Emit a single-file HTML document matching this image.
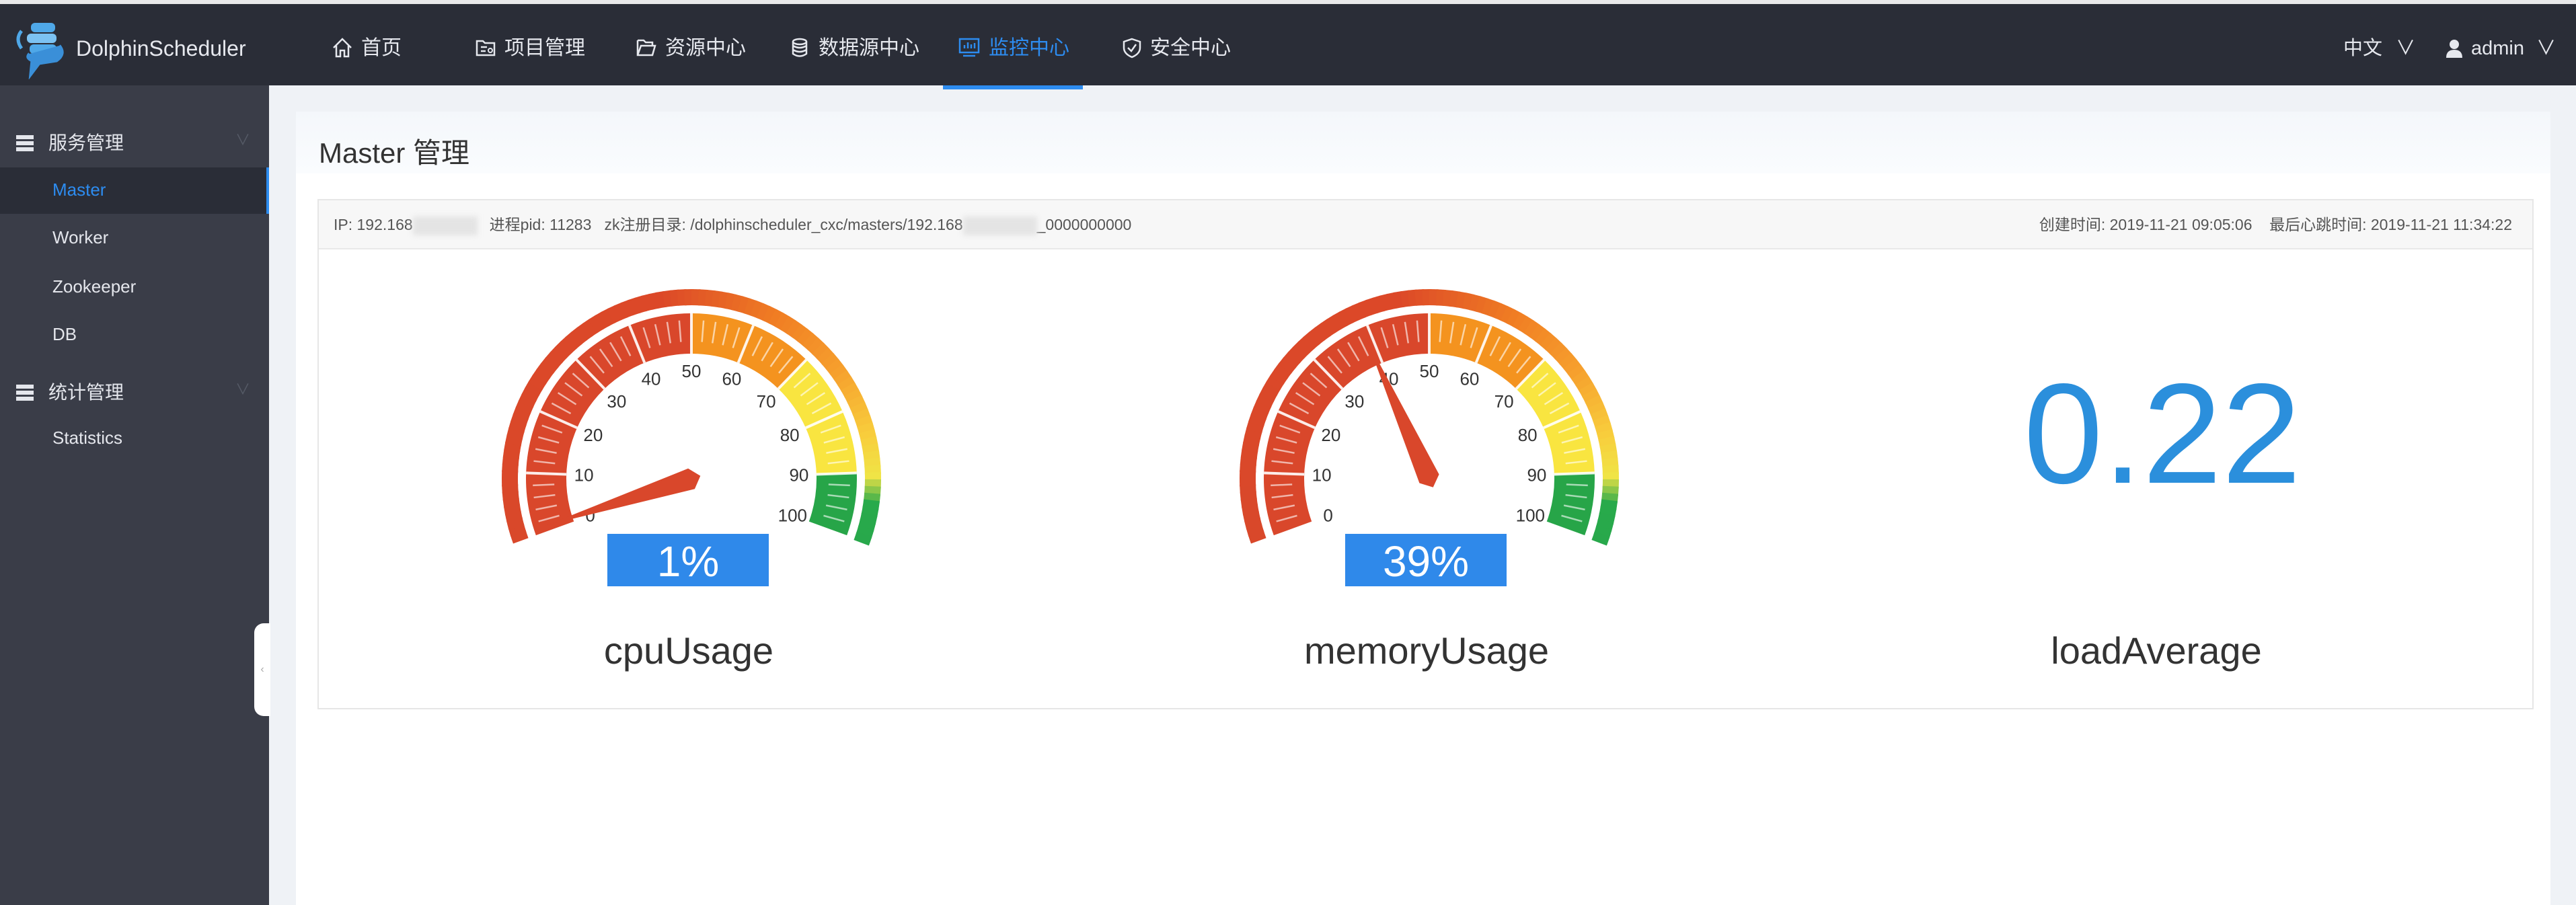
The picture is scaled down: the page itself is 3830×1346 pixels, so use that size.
<!DOCTYPE html>
<html><head><meta charset="utf-8">
<style>
*{margin:0;padding:0;box-sizing:border-box}
body{width:3830px;height:1346px;overflow:hidden;background:#eff2f6;font-family:"Liberation Sans","Noto Sans CJK SC",sans-serif;position:relative}
.top{position:absolute;left:0;top:0;width:3830px;height:127px;background:#2a2d37;border-top:6px solid #e9e9ea}
.nav{position:absolute;top:46px;color:#e6e8ee;font-size:30px;white-space:nowrap;line-height:40px}
.nav svg{vertical-align:-6px;margin-right:12px}
.act{color:#2d8cf0}
.uline{position:absolute;left:1402px;top:121px;width:208px;height:6px;background:#2d8cf0}
.side{position:absolute;left:0;top:127px;width:400px;height:1219px;background:#3a3d48}
.si{position:absolute;left:78px;color:#e4e6ec;font-size:26px}
.sh{position:absolute;left:24px;color:#e4e6ec;font-size:28px}
.sh i{display:inline-block;width:26px;height:24px;background:repeating-linear-gradient(#e4e6ec 0 6px,transparent 6px 9px);vertical-align:-3px;margin-right:22px}
.panel{position:absolute;left:440px;top:166px;width:3352px;height:1180px;background:#fff}
.phead{position:absolute;left:0;top:0;width:100%;height:92px;background:linear-gradient(#f4f7fb,#fafcfe)}
.card{position:absolute;left:472px;top:296px;width:3295px;height:759px;border:2px solid #e6e6e6;background:#fff}
.ch{position:absolute;left:0;top:0;width:100%;height:73px;background:#f7f7f7;border-bottom:2px solid #e8e8e8;font-size:23px;color:#555;line-height:73px;white-space:nowrap}
.blur{display:inline-block;width:96px;height:28px;background:#e4e4e4;filter:blur(4px);vertical-align:middle}
.lbl{position:absolute;font-size:56px;color:#333;transform:translateX(-50%);white-space:nowrap}
</style></head><body>
<div class="top">
 <svg style="position:absolute;left:18px;top:22px" width="90" height="90" viewBox="0 0 90 90">
  <rect x="28" y="6" width="36" height="14" rx="6" fill="#4fa8e8"/>
  <rect x="22" y="22" width="44" height="14" rx="6" fill="#7cc2f2"/>
  <rect x="26" y="38" width="40" height="14" rx="6" fill="#4fa8e8"/>
  <path d="M14 18 Q4 30 14 44" stroke="#4fa8e8" stroke-width="5" fill="none"/>
  <path d="M70 40 Q80 52 66 62 L40 66 L28 82 L30 62 Q20 58 26 52" stroke="#3a8fd8" stroke-width="5" fill="#3a8fd8"/>
 </svg>
 <div class="nav" style="left:113px;font-size:32px">DolphinScheduler</div>
 <div class="nav" style="left:493px"><svg width="32" height="32" viewBox="0 0 32 32"><path d="M3 16 L16 3 L29 16 M7 13 V29 H13 V20 H19 V29 H25 V13" stroke="#e6e8ee" stroke-width="2.5" fill="none"/></svg>首页</div>
 <div class="nav" style="left:706px"><svg width="32" height="32" viewBox="0 0 32 32"><path d="M3 6 H12 L15 9 H29 V27 H3 Z M9 15 H18 M9 21 H16" stroke="#e6e8ee" stroke-width="2.5" fill="none"/><circle cx="23" cy="20" r="3" stroke="#e6e8ee" stroke-width="2" fill="none"/></svg>项目管理</div>
 <div class="nav" style="left:945px"><svg width="32" height="32" viewBox="0 0 32 32"><path d="M3 5 H12 L15 8 H25 V13 M3 5 V27 H25 L29 13 H8 L3 27" stroke="#e6e8ee" stroke-width="2.5" fill="none"/></svg>资源中心</div>
 <div class="nav" style="left:1173px"><svg width="32" height="32" viewBox="0 0 32 32"><ellipse cx="16" cy="7" rx="10" ry="4" stroke="#e6e8ee" stroke-width="2.5" fill="none"/><path d="M6 7 V25 Q16 32 26 25 V7 M6 13 Q16 19 26 13 M6 19 Q16 25 26 19" stroke="#e6e8ee" stroke-width="2.5" fill="none"/></svg>数据源中心</div>
 <div class="nav act" style="left:1424px"><svg width="34" height="32" viewBox="0 0 34 32"><rect x="3" y="3" width="28" height="20" stroke="#2d8cf0" stroke-width="2.5" fill="none"/><path d="M10 17 V12 M15 17 V8 M20 17 V11 M25 17 V9 M8 28 H26" stroke="#2d8cf0" stroke-width="2.5"/></svg>监控中心</div>
 <div class="nav" style="left:1668px"><svg width="30" height="32" viewBox="0 0 30 32"><path d="M15 3 L27 7 V16 Q27 25 15 30 Q3 25 3 16 V7 Z M9 16 L14 21 L21 11" stroke="#e6e8ee" stroke-width="2.5" fill="none"/></svg>安全中心</div>
 <div class="nav" style="left:3484px;font-size:29px">中文 <span style="margin-left:12px">∨</span></div>
 <div class="nav" style="left:3636px;font-size:29px"><svg width="26" height="30" viewBox="0 0 26 30"><circle cx="13" cy="9" r="7" fill="#e6e8ee"/><path d="M1 29 Q1 17 13 17 Q25 17 25 29Z" fill="#e6e8ee"/></svg>admin <span style="margin-left:10px">∨</span></div>
 <div class="uline"></div>
</div>
<div class="side">
 <div class="sh" style="top:64px"><i></i>服务管理<span style="position:absolute;left:326px;color:#555a66;font-size:22px">∨</span></div>
 <div style="position:absolute;left:0;top:122px;width:400px;height:69px;background:#2a2d37;border-right:4px solid #2d8cf0"></div>
 <div class="si" style="top:140px;color:#2d8cf0">Master</div>
 <div class="si" style="top:211px">Worker</div>
 <div class="si" style="top:284px">Zookeeper</div>
 <div class="si" style="top:355px">DB</div>
 <div class="sh" style="top:435px"><i></i>统计管理<span style="position:absolute;left:326px;color:#555a66;font-size:22px">∨</span></div>
 <div class="si" style="top:509px">Statistics</div>
 <div style="position:absolute;left:378px;top:800px;width:24px;height:138px;background:#fff;border-radius:14px 0 0 14px;color:#aaa;font-size:16px;line-height:138px;text-align:center">‹</div>
</div>
<div class="panel"><div class="phead"></div>
 <div style="position:absolute;left:34px;top:28px;font-size:42px;color:#333">Master 管理</div>
</div>
<div class="card">
 <div class="ch"><span style="margin-left:22px">IP: 192.168</span><span class="blur"></span><span style="margin-left:18px">进程pid: 11283&nbsp;&nbsp; zk注册目录: /dolphinscheduler_cxc/masters/192.168</span><span class="blur" style="width:110px"></span><span>_0000000000</span>
 <span style="position:absolute;right:30px">创建时间: 2019-11-21 09:05:06&nbsp;&nbsp;&nbsp; 最后心跳时间: 2019-11-21 11:34:22</span></div>
</div>
<svg id="g" style="position:absolute;left:0;top:0" width="3830" height="1346"></svg>
<div class="lbl" style="left:1024px;top:935px">cpuUsage</div>
<div class="lbl" style="left:2121px;top:935px">memoryUsage</div>
<div class="lbl" style="left:3206px;top:935px">loadAverage</div>
<div style="position:absolute;left:3215px;top:530px;transform:translateX(-50%);font-size:212px;color:#2b8fdc;line-height:230px">0.22</div>
<script>
(function(){
var s='';
function P(cx,cy,r,a){var t=a*Math.PI/180;return [cx+r*Math.cos(t),cy-r*Math.sin(t)];}
function arc(cx,cy,r1,r2,a1,a2,col){var p1=P(cx,cy,r2,a1),p2=P(cx,cy,r2,a2),p3=P(cx,cy,r1,a2),p4=P(cx,cy,r1,a1);var l=Math.abs(a1-a2)>180?1:0;
return '<path d="M'+p1+' A'+r2+' '+r2+' 0 '+l+' 1 '+p2+' L'+p3+' A'+r1+' '+r1+' 0 '+l+' 0 '+p4+'Z" fill="'+col+'"/>';}
function lerp(a,b,t){return a.map(function(v,i){return Math.round(v+(b[i]-v)*t);});}
var stops=[[0,[217,72,42]],[0.45,[220,72,40]],[0.62,[240,125,35]],[0.74,[246,160,45]],[0.84,[248,205,60]],[0.9,[240,228,70]],[0.94,[40,170,75]],[1,[40,168,75]]];
function gc(t){for(var i=0;i<stops.length-1;i++){if(t<=stops[i+1][0]){var u=(t-stops[i][0])/(stops[i+1][0]-stops[i][0]);var c=lerp(stops[i][1],stops[i+1][1],u);return 'rgb('+c+')';}}return 'rgb(40,168,75)';}
function gauge(cx,cy,val){
 var A=200,R=220;function ang(v){return A-v/100*R;}
 var N=100;for(var i=0;i<N;i++){s+=arc(cx,cy,258,282,ang(i*100/N),ang((i+1)*100/N+0.3),gc(i/N));}
 var seg=[[0,50,'#d9472b'],[50,70,'#f4931f'],[70,90,'#f9e540'],[90,100,'#27a548']];
 seg.forEach(function(q){s+=arc(cx,cy,186,246,ang(q[0]),ang(q[1]),q[2]);});
 for(var v=0;v<=100;v+=2){var a=ang(v);var major=v%10==0;var p1=P(cx,cy,major?186:204,a),p2=P(cx,cy,major?246:236,a);
  if(v>0&&v<100)s+='<line x1="'+p1[0]+'" y1="'+p1[1]+'" x2="'+p2[0]+'" y2="'+p2[1]+'" stroke="#fff" stroke-opacity="'+(major?0.9:0.6)+'" stroke-width="'+(major?4:2.5)+'"/>';}
 for(var v=0;v<=100;v+=10){var p=P(cx,cy,160,ang(v));s+='<text x="'+p[0]+'" y="'+(p[1]+9)+'" font-size="26" fill="#333" text-anchor="middle" font-family="Liberation Sans,sans-serif">'+v+'</text>';}
 var a=ang(val),t=P(cx,cy,225,a),bk=P(cx,cy,-14,a),m1=P(cx,cy,16,a+90),m2=P(cx,cy,16,a-90);
 s+='<path d="M'+t+' L'+m1+' L'+bk+' L'+m2+'Z" fill="#d9472b"/>';
 s+='<rect x="'+(cx-125)+'" y="'+(cy+82)+'" width="240" height="78" fill="#2f89ea"/>';
 s+='<text x="'+(cx-5)+'" y="'+(cy+145)+'" font-size="64" fill="#fff" text-anchor="middle" font-family="Liberation Sans,sans-serif">'+val+'%</text>';
}
gauge(1028,712,1);gauge(2125,712,39);
document.getElementById('g').innerHTML=s;
})();
</script>
</body></html>
